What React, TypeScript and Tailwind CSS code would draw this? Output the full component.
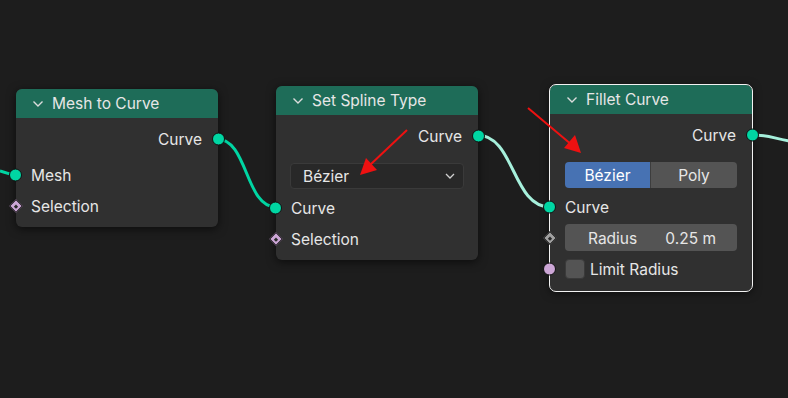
import React from "react";

type Socket = "geo" | "field" | "float" | "bool";

const SocketDot = ({ kind, side }: { kind: Socket; side: "in" | "out" }) => {
  const pos = side === "in" ? "left-[-7px]" : "right-[-7px]";
  if (kind === "geo") {
    return (
      <span
        className={`absolute ${pos} top-1/2 -translate-y-1/2 w-[13px] h-[13px] rounded-full bg-[#00d6a3] border border-[#111]`}
      />
    );
  }
  if (kind === "bool") {
    return (
      <span
        className={`absolute ${pos} top-1/2 -translate-y-1/2 w-[13px] h-[13px] rounded-full bg-[#cca6d6] border border-[#111]`}
      />
    );
  }
  // diamond sockets (fields)
  const color = kind === "field" ? "bg-[#cca6d6]" : "bg-[#a1a1a1]";
  return (
    <span
      className={`absolute ${side === "in" ? "left-[-7px]" : "right-[-7px]"} top-1/2 -translate-y-1/2 w-[14px] h-[14px] flex items-center justify-center`}
    >
      <span className={`w-[10px] h-[10px] rotate-45 ${color} border border-[#111] flex items-center justify-center`}>
        <span className="w-[3px] h-[3px] bg-[#2a2a2a]" />
      </span>
    </span>
  );
};

const Row = ({
  label,
  side,
  kind,
  h = "h-[30px]",
}: {
  label: string;
  side: "in" | "out";
  kind: Socket;
  h?: string;
}) => (
  <div className={`relative ${h} flex items-center ${side === "out" ? "justify-end pr-[16px]" : "pl-[15px]"}`}>
    <span className="pt-[2px]">{label}</span>
    <SocketDot kind={kind} side={side} />
  </div>
);

const Chevron = () => (
  <svg width="12" height="8" viewBox="0 0 12 8" className="mr-[8px]">
    <path d="M1.5 1.5 L6 6 L10.5 1.5" stroke="#dcdcdc" strokeWidth="1.4" fill="none" />
  </svg>
);

const Node = ({
  title,
  top,
  left,
  selected,
  children,
}: {
  title: string;
  top: string;
  left: string;
  selected?: boolean;
  children: React.ReactNode;
}) => (
  <div
    className={`absolute ${top} ${left} w-[202px] rounded-[6px] bg-[#303030] shadow-[0_2px_10px_rgba(0,0,0,0.6)] ${
      selected ? "outline outline-1 outline-[#f2f2f2]" : ""
    }`}
  >
    <div className="h-[29px] flex items-center pl-[16px] bg-[#1e6c58] rounded-t-[6px] text-[#e6e6e6]">
      <Chevron />
      <span className="pt-[1px]">{title}</span>
    </div>
    {children}
  </div>
);

export default function App() {
  return (
    <div
      className="relative w-[788px] h-[398px] overflow-hidden bg-[#1d1d1d] text-[15.5px] text-[#e6e6e6]"
      style={{ fontFamily: "Inter, 'DejaVu Sans', sans-serif" }}
    >
      {/* wires */}
      <svg className="absolute inset-0" width="788" height="398">
        <path d="M0 171 C8 173 10 175 16 175" stroke="#00d6a3" strokeWidth="3" fill="none" />
        <path d="M217 139 C248 139 245 207 276 207" stroke="#00d6a3" strokeWidth="3" fill="none" />
        <path d="M477 135 C515 135 512 207 550 207" stroke="#a6f0dc" strokeWidth="3" fill="none" />
        <path d="M752 135 C770 135 775 139 790 141" stroke="#a6f0dc" strokeWidth="3" fill="none" />
      </svg>

      <Node title="Mesh to Curve" top="top-[89px]" left="left-[16px]">
        <div className="pt-[6px] pb-[6px]">
          <Row label="Curve" side="out" kind="geo" />
          <div className="mt-[6px]" />
          <Row label="Mesh" side="in" kind="geo" />
          <Row label="Selection" side="in" kind="field" h="h-[31px]" />
        </div>
      </Node>

      <Node title="Set Spline Type" top="top-[86px]" left="left-[276px]">
        <div className="pt-[6px] pb-[6px]">
          <Row label="Curve" side="out" kind="geo" />
          <div className="mt-[12px] mx-[14px] h-[26px] rounded-[4px] bg-[#282828] border border-[#3a3a3a] flex items-center justify-between pl-[12px] pr-[8px]">
            <span className="pt-[2px]">Bézier</span>
            <svg width="10" height="6" viewBox="0 0 10 6">
              <path d="M1 1 L5 5 L9 1" stroke="#d0d0d0" strokeWidth="1.3" fill="none" />
            </svg>
          </div>
          <div className="mt-[4px]" />
          <Row label="Curve" side="in" kind="geo" />
          <Row label="Selection" side="in" kind="field" h="h-[31px]" />
        </div>
      </Node>

      <Node title="Fillet Curve" top="top-[85px]" left="left-[550px]" selected>
        <div className="pt-[6px] pb-[7px]">
          <Row label="Curve" side="out" kind="geo" />
          <div className="mt-[12px] mx-[15px] h-[26px] rounded-[4px] overflow-hidden flex">
            <div className="w-[85px] bg-[#4772b3] flex items-center justify-center pt-[2px] text-white">Bézier</div>
            <div className="flex-1 bg-[#545454] flex items-center justify-center pt-[2px] border-l border-[#3d3d3d]">Poly</div>
          </div>
          <div className="mt-[4px]" />
          <Row label="Curve" side="in" kind="geo" />
          <div className="relative h-[31px] flex items-center px-[15px]">
            <div className="w-full h-[27px] rounded-[4px] bg-[#545454] flex items-center justify-between pt-[2px] pl-[23px] pr-[21px]">
              <span>Radius</span>
              <span>0.25 m</span>
            </div>
            <SocketDot kind="float" side="in" />
          </div>
          <div className="relative h-[31px] flex items-center pl-[15px]">
            <span className="w-[20px] h-[20px] rounded-[4px] bg-[#545454] border border-[#3a3a3a] mr-[5px]" />
            <span className="pt-[2px]">Limit Radius</span>
            <SocketDot kind="bool" side="in" />
          </div>
        </div>
      </Node>

      {/* red annotation arrows */}
      <svg className="absolute inset-0 pointer-events-none" width="788" height="398">
        <line x1="407" y1="130" x2="370" y2="165" stroke="#ee1111" strokeWidth="2" />
        <polygon points="360,175 366,158 377,170" fill="#ee1111" />
        <line x1="528" y1="108" x2="572" y2="145" stroke="#ee1111" strokeWidth="2" />
        <polygon points="581,153 564,148 575,135" fill="#ee1111" />
      </svg>
    </div>
  );
}
